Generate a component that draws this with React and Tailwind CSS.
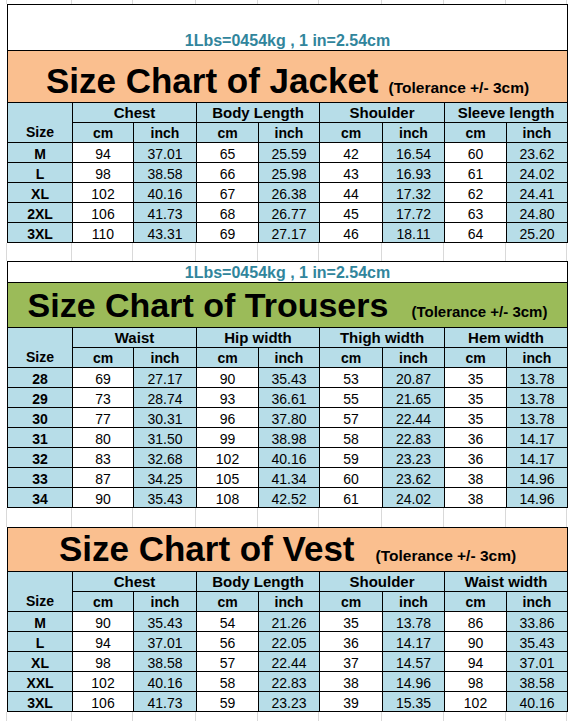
import React from "react"

const font = "font-['Liberation_Sans',Arial,sans-serif]"
const cols = "grid-cols-[65px_61px_63px_62px_61px_63px_62px_62px_61px]"
const gapWidths = ["w-[65px]", "w-[61px]", "w-[63px]", "w-[62px]", "w-[61px]", "w-[63px]", "w-[62px]", "w-[62px]", "w-[61px]"]

const jacket = {
  groups: ["Chest", "Body Length", "Shoulder", "Sleeve length"],
  rows: [
    ["M", "94", "37.01", "65", "25.59", "42", "16.54", "60", "23.62"],
    ["L", "98", "38.58", "66", "25.98", "43", "16.93", "61", "24.02"],
    ["XL", "102", "40.16", "67", "26.38", "44", "17.32", "62", "24.41"],
    ["2XL", "106", "41.73", "68", "26.77", "45", "17.72", "63", "24.80"],
    ["3XL", "110", "43.31", "69", "27.17", "46", "18.11", "64", "25.20"],
  ],
}

const trousers = {
  groups: ["Waist", "Hip width", "Thigh width", "Hem width"],
  rows: [
    ["28", "69", "27.17", "90", "35.43", "53", "20.87", "35", "13.78"],
    ["29", "73", "28.74", "93", "36.61", "55", "21.65", "35", "13.78"],
    ["30", "77", "30.31", "96", "37.80", "57", "22.44", "35", "13.78"],
    ["31", "80", "31.50", "99", "38.98", "58", "22.83", "36", "14.17"],
    ["32", "83", "32.68", "102", "40.16", "59", "23.23", "36", "14.17"],
    ["33", "87", "34.25", "105", "41.34", "60", "23.62", "38", "14.96"],
    ["34", "90", "35.43", "108", "42.52", "61", "24.02", "38", "14.96"],
  ],
}

const vest = {
  groups: ["Chest", "Body Length", "Shoulder", "Waist width"],
  rows: [
    ["M", "90", "35.43", "54", "21.26", "35", "13.78", "86", "33.86"],
    ["L", "94", "37.01", "56", "22.05", "36", "14.17", "90", "35.43"],
    ["XL", "98", "38.58", "57", "22.44", "37", "14.57", "94", "37.01"],
    ["XXL", "102", "40.16", "58", "22.83", "38", "14.96", "98", "38.58"],
    ["3XL", "106", "41.73", "59", "23.23", "39", "15.35", "102", "40.16"],
  ],
}

const GapRow = ({ h }) => (
  <div className={`flex ${h}`}>
    <div className="w-[7px] border-r border-[#d9d9d9]" />
    {gapWidths.map((w, i) => (
      <div key={i} className={`${w} border-r border-[#d9d9d9]`} />
    ))}
    <div className="flex-1" />
  </div>
)

const InfoText = () => (
  <span className="text-[16px] font-bold leading-none text-[#31859c]">1Lbs=0454kg , 1 in=2.54cm</span>
)

const HeaderRows = ({ groups }) => (
  <>
    <div className="row-span-2 flex items-end justify-center border-r border-b border-black bg-[#b7dde8] pb-[1px] text-[14px] font-bold leading-[18px]">
      Size
    </div>
    {groups.map((g) => (
      <div key={g} className="col-span-2 flex items-center justify-center border-r border-b border-black bg-[#b7dde8] text-[15px] font-bold leading-none">
        {g}
      </div>
    ))}
    {groups.map((g) => (
      <React.Fragment key={g + "sub"}>
        <div className="flex items-center justify-center border-r border-b border-black bg-[#b7dde8] text-[14px] font-bold leading-none">cm</div>
        <div className="flex items-center justify-center border-r border-b border-black bg-[#b7dde8] text-[14px] font-bold leading-none">inch</div>
      </React.Fragment>
    ))}
  </>
)

const DataRows = ({ rows }) =>
  rows.map((r) =>
    r.map((v, i) => (
      <div
        key={r[0] + i}
        className={`flex items-center justify-center border-r border-b border-black pt-[2px] text-[14px] leading-none ${
          i === 0 ? "bg-[#b7dde8] font-bold" : i % 2 === 1 ? "bg-white" : "bg-[#b7dde8]"
        }`}
      >
        {v}
      </div>
    ))
  )

export default function App() {
  return (
    <div className={`w-[575px] h-[721px] overflow-hidden bg-white text-black ${font}`}>
      <GapRow h="h-[4px]" />

      {/* Jacket */}
      <div className={`ml-[7px] w-[561px] grid ${cols} grid-rows-[46px_52px_repeat(7,20px)] border-l border-t border-black`}>
        <div className="col-span-9 flex items-end justify-center border-r border-b border-black bg-white pb-[1px]">
          <InfoText />
        </div>
        <div className="col-span-9 flex items-end justify-center border-r border-b border-black bg-[#fabf8f] pb-[4px]">
          <div className="flex items-baseline gap-[10px]">
            <span className="text-[35px] font-bold leading-none">Size Chart of Jacket</span>
            <span className="text-[15.5px] font-bold leading-none">(Tolerance +/- 3cm)</span>
          </div>
        </div>
        <HeaderRows groups={jacket.groups} />
        <DataRows rows={jacket.rows} />
      </div>

      <GapRow h="h-[18px]" />

      {/* Trousers */}
      <div className={`ml-[7px] w-[561px] grid ${cols} grid-rows-[21px_45px_repeat(9,20px)] border-l border-t border-black`}>
        <div className="col-span-9 flex items-end justify-center border-r border-b border-black bg-white pb-[1px]">
          <InfoText />
        </div>
        <div className="col-span-9 flex items-end justify-center border-r border-b border-black bg-[#9bbb59] pb-[5px]">
          <div className="flex items-baseline gap-[23px]">
            <span className="text-[34px] font-bold leading-none">Size Chart of Trousers</span>
            <span className="text-[15px] font-bold leading-none">(Tolerance +/- 3cm)</span>
          </div>
        </div>
        <HeaderRows groups={trousers.groups} />
        <DataRows rows={trousers.rows} />
      </div>

      <GapRow h="h-[19px]" />

      {/* Vest */}
      <div className={`ml-[7px] w-[561px] grid ${cols} grid-rows-[44px_repeat(7,20px)] border-l border-t border-black`}>
        <div className="col-span-9 flex items-end justify-center border-r border-b border-black bg-[#fabf8f] pb-[5px]">
          <div className="flex items-baseline gap-[21px]">
            <span className="text-[35px] font-bold leading-none">Size Chart of Vest</span>
            <span className="text-[15.5px] font-bold leading-none">(Tolerance +/- 3cm)</span>
          </div>
        </div>
        <HeaderRows groups={vest.groups} />
        <DataRows rows={vest.rows} />
      </div>

      <GapRow h="h-[10px]" />
    </div>
  )
}
